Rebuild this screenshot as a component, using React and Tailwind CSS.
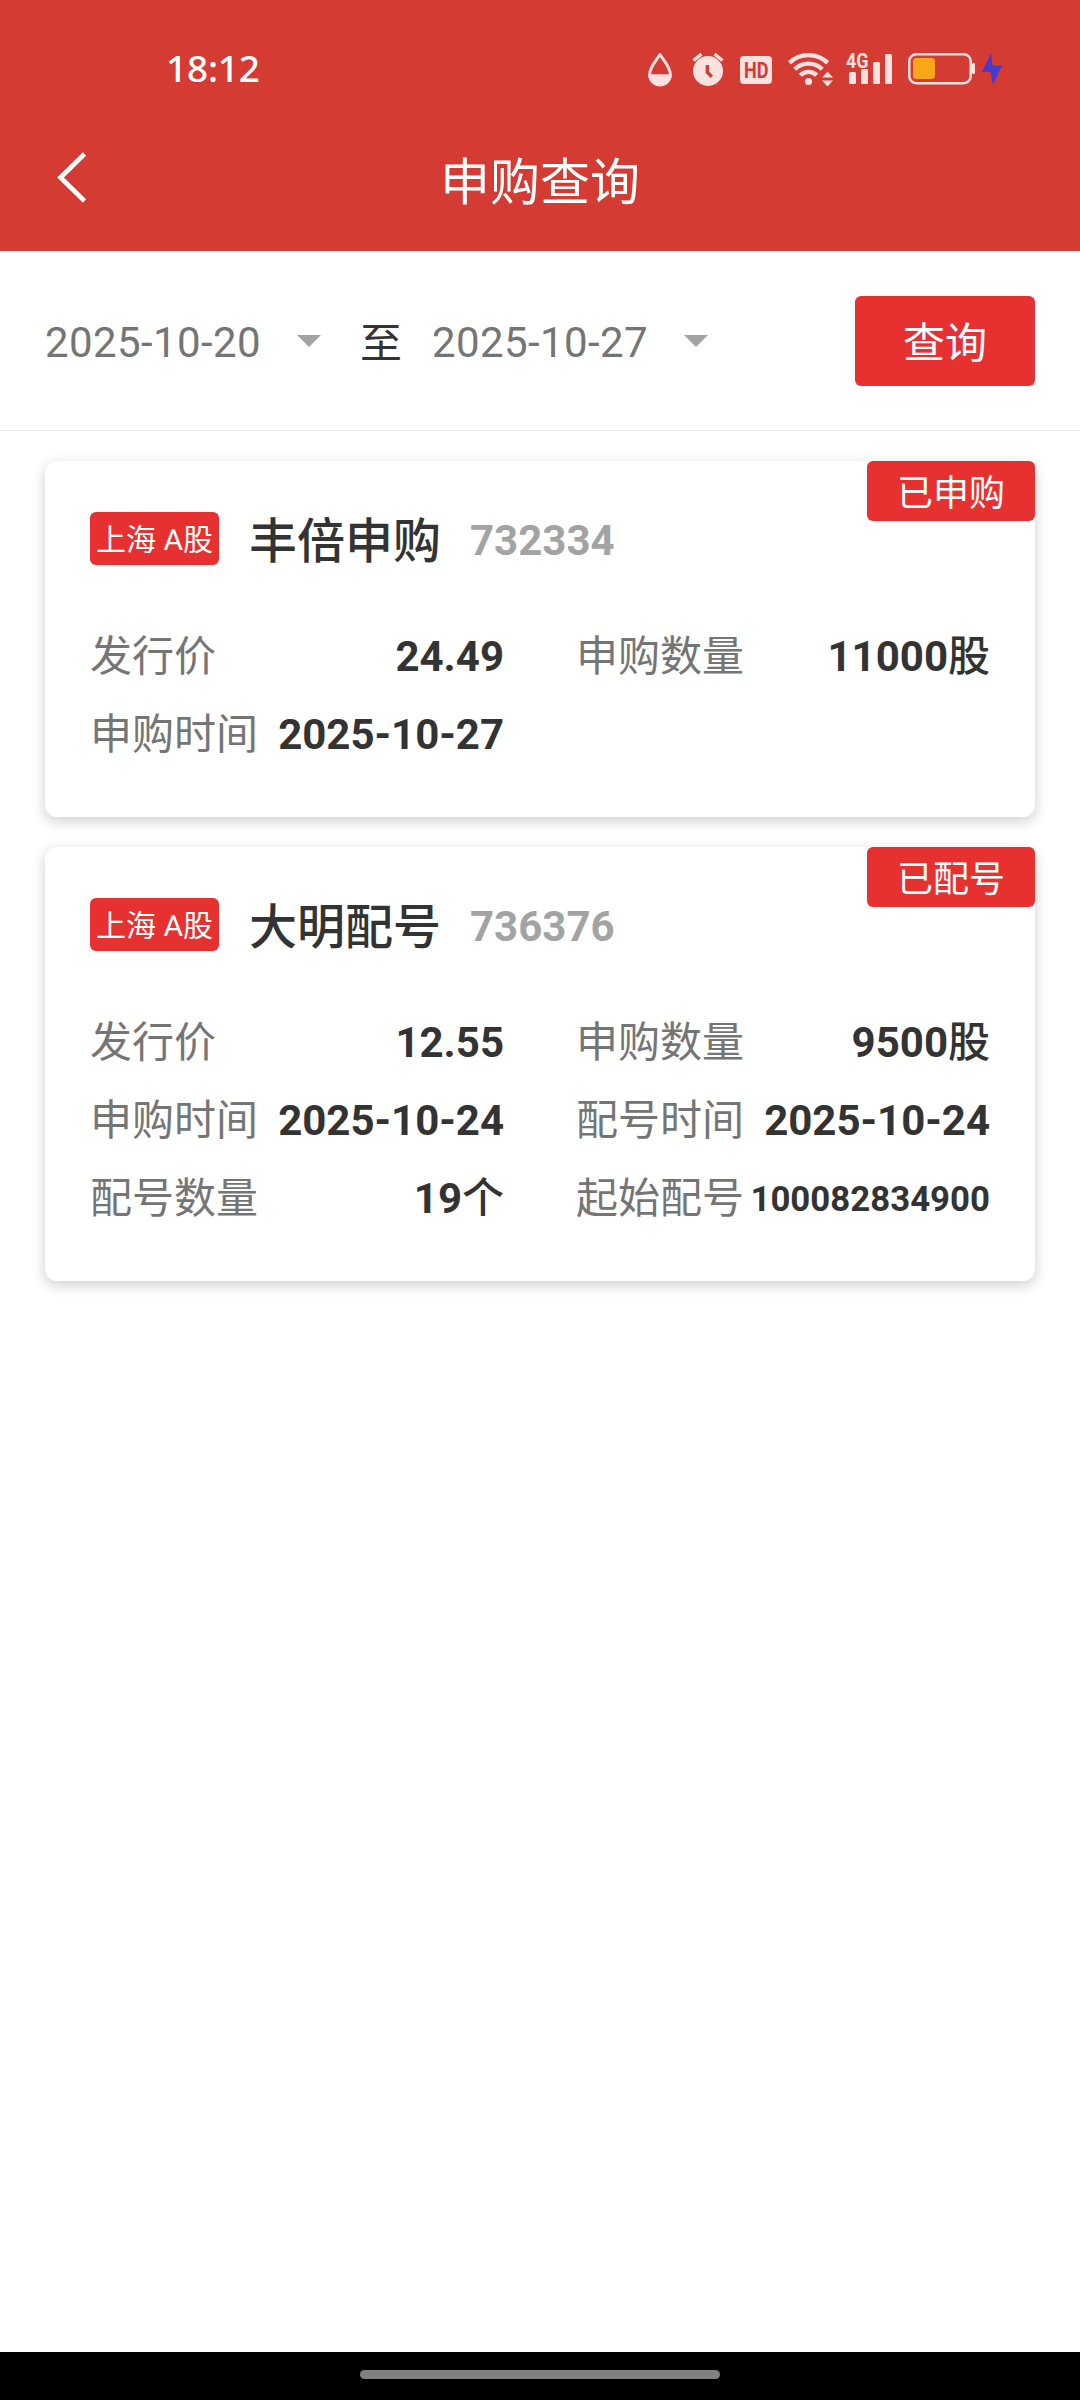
const records = [
  {
    status: '已申购',
    name: '丰倍申购',
    code: '732334',
    height: 'h-[356px]',
    fields: [
      { label: '发行价', value: '24.49' },
      { label: '申购数量', value: '11000', unit: '股' },
      { label: '申购时间', value: '2025-10-27' },
    ],
  },
  {
    status: '已配号',
    name: '大明配号',
    code: '736376',
    height: 'h-[434px]',
    fields: [
      { label: '发行价', value: '12.55' },
      { label: '申购数量', value: '9500', unit: '股' },
      { label: '申购时间', value: '2025-10-24' },
      { label: '配号时间', value: '2025-10-24' },
      { label: '配号数量', value: '19', unit: '个' },
      { label: '起始配号', value: '100082834900', compact: true },
    ],
  },
];

function DropIcon() {
  return (
    <svg className="ml-[647px] h-9 w-[26px] shrink-0" viewBox="0 0 26 36">
      <path d="M13 3.5C10 8.5 2.6 16 2.6 23.5a10.4 10.4 0 0 0 20.8 0C23.4 16 16 8.500 13 3.500Z" fill="none" stroke="#fbe1e0" strokeWidth="3" strokeLinejoin="round" />
      <path d="M2 23.300h22a11 11.500 0 0 1-22 0Z" fill="#fbe1e0" />
    </svg>
  );
}

function AlarmIcon() {
  return (
    <svg className="ml-[18px] h-9 w-[34px] shrink-0" viewBox="0 0 34 36">
      <circle cx="17" cy="20" r="15" fill="#fbe1e0" />
      <path d="M2.500 9.500 10.500 3M31.500 9.500 23.500 3" stroke="#fbe1e0" strokeWidth="3.400" />
      <path d="M16.300 14v7.300l4.500 4.500" fill="none" stroke="#d43b33" strokeWidth="3.400" />
    </svg>
  );
}

function HdIcon() {
  return (
    <svg className="ml-[15px] h-9 w-8 shrink-0 overflow-visible" viewBox="0 0 32 36">
      <rect x="0" y="5" width="32" height="28" rx="4" fill="#fbe1e0" />
      <text x="4" y="27" textLength="24.500" lengthAdjust="spacingAndGlyphs" fontFamily="Roboto" fontWeight="700" fontSize="22.500" fill="#d43b33">HD</text>
    </svg>
  );
}

function WifiIcon() {
  return (
    <svg className="ml-[15px] h-9 w-12 shrink-0" viewBox="0 0 48 36">
      <g fill="none" stroke="#fbe1e0" strokeWidth="4.400">
        <path d="M2.400 11.800a27.500 27.500 0 0 1 38.200 0" />
        <path d="M7.800 18.200a19.500 19.500 0 0 1 27.400 0" />
        <path d="M13.300 24.300a11.500 11.500 0 0 1 16.400 0" />
      </g>
      <circle cx="21.500" cy="30.500" r="3.600" fill="#fbe1e0" />
      <path d="M34 27 40.500 20l6.500 7ZM34 29h13L40.500 36Z" fill="#fbe1e0" stroke="#d43b33" strokeWidth="1" />
    </svg>
  );
}

function SignalIcon() {
  return (
    <svg className="ml-[10px] h-9 w-[48px] shrink-0 overflow-visible" viewBox="0 0 48 36">
      <g fill="#fbe1e0">
        <rect x="4" y="21" width="7" height="12" rx="1.500" />
        <rect x="16" y="18" width="7" height="15" rx="1.500" />
        <rect x="28" y="11" width="7" height="22" rx="1.500" />
        <rect x="40" y="3" width="7" height="30" rx="1.500" />
        <text x="1" y="16.500" textLength="22.500" lengthAdjust="spacingAndGlyphs" fontFamily="Roboto" fontWeight="700" fontSize="20.500">4G</text>
      </g>
    </svg>
  );
}

function BatteryIcon() {
  return (
    <svg className="ml-[15px] h-9 w-[68px] shrink-0" viewBox="0 0 68 36">
      <rect x="1.250" y="3.250" width="61.500" height="29" rx="7" fill="none" stroke="#fbe1e0" strokeWidth="2.500" />
      <rect x="5" y="7" width="22" height="21" rx="3.500" fill="#f9a716" />
      <rect x="64" y="12" width="3" height="11" rx="1.200" fill="#fbe1e0" />
    </svg>
  );
}

function BoltIcon() {
  return (
    <svg className="ml-[6px] h-9 w-5 shrink-0" viewBox="0 0 20 36">
      <path d="M9 2.500 0 21h8.500L11 34l9-19.500h-9.500Z" fill="#463bd0" />
    </svg>
  );
}

function StatusBar() {
  return (
    <div className="flex h-[100px] items-center">
      <div className="w-0 whitespace-nowrap">
        <span className="ml-[166px] font-['Noto_Sans',sans-serif] text-[37px] leading-[38px] font-medium tracking-[-0.2px] text-white">18:12</span>
      </div>
      <DropIcon />
      <AlarmIcon />
      <HdIcon />
      <WifiIcon />
      <SignalIcon />
      <BatteryIcon />
      <BoltIcon />
    </div>
  );
}

function Header() {
  return (
    <header className="h-[251px] shrink-0 bg-[#d43b33] pt-[19px]">
      <StatusBar />
      <div className="grid h-[120px] grid-cols-[1fr_auto_1fr] items-center">
        <svg className="mb-[3px] ml-[56px] h-[52px] w-8" viewBox="0 0 32 52">
          <path d="M28.500 2 4.500 25.500 28.500 49" fill="none" stroke="#fff" strokeWidth="4.600" />
        </svg>
        <h1 className="pt-[8px] text-[50px] leading-[60px] text-white">申购查询</h1>
        <span />
      </div>
    </header>
  );
}

function DatePicker({ value }) {
  return (
    <div className="flex items-center">
      <span className="w-[252px] pt-[5px] text-[42px] leading-[50px] tracking-[0.4px] text-[#757575]">{value}</span>
      <svg className="h-3 w-6" viewBox="0 0 24 12">
        <path d="M0 0h24L12 12Z" fill="#a3a3a3" />
      </svg>
    </div>
  );
}

function FilterBar() {
  return (
    <div className="flex h-[180px] shrink-0 items-center border-b border-[#ececec] px-[45px]">
      <DatePicker value="2025-10-20" />
      <span className="mr-[30px] ml-[39px] w-[42px] pt-[7px] text-[42px] leading-[50px] text-[#333333]">至</span>
      <DatePicker value="2025-10-27" />
      <button className="ml-auto h-[90px] w-[180px] rounded-[6px] bg-[#e73130] pt-[6px] text-[42px] leading-[50px] text-white">查询</button>
    </div>
  );
}

function Field({ label, value, unit, compact }) {
  return (
    <div className="flex h-[78px] items-center justify-between whitespace-nowrap">
      <span className="text-[42px] leading-[78px] text-[#757575]">{label}</span>
      <span className={compact ? 'text-[34.8px] leading-[78px] font-bold text-[#333333]' : 'text-[42px] leading-[78px] font-bold text-[#333333]'}>
        {value}
        {unit && <span className="font-medium">{unit}</span>}
      </span>
    </div>
  );
}

function Card({ status, name, code, height, fields }) {
  return (
    <section className={`relative rounded-[12px] bg-white px-[45px] pt-[51px] shadow-[0_4px_14px_rgba(0,0,0,0.2)] ${height}`}>
      <div className="absolute top-0 right-0 flex h-[60px] w-[168px] items-center justify-center rounded-[6px] bg-[#e73130] pt-[6px] text-[36px] leading-[42px] text-white">{status}</div>
      <div className="flex h-[53px] items-center">
        <span className="flex h-[53px] w-[129px] items-center justify-center rounded-[6px] bg-[#e73130] pt-[3px] text-[30px] leading-[36px] whitespace-nowrap text-white">上海 A股</span>
        <h2 className="ml-[30px] pt-[6px] text-[48px] leading-[56px] font-medium text-[#333333]">{name}</h2>
        <span className="ml-[29px] pt-[4px] text-[42px] leading-[50px] font-bold text-[#a3a3a3]">{code}</span>
      </div>
      <div className="mt-[53px] grid grid-cols-2 gap-x-[72px]">
        {fields.map((field) => (
          <Field key={field.label} {...field} />
        ))}
      </div>
    </section>
  );
}

export default function App() {
  return (
    <div className="flex h-[2400px] w-[1080px] flex-col bg-white font-[Roboto,'Noto_Sans_CJK_SC',sans-serif]">
      <Header />
      <FilterBar />
      <main className="flex flex-1 flex-col gap-[30px] px-[45px] pt-[30px]">
        {records.map((record) => (
          <Card key={record.code} {...record} />
        ))}
      </main>
      <footer className="flex h-12 shrink-0 justify-center bg-black pt-[18px]">
        <div className="h-[9px] w-[360px] rounded-full bg-[#808080]" />
      </footer>
    </div>
  );
}
